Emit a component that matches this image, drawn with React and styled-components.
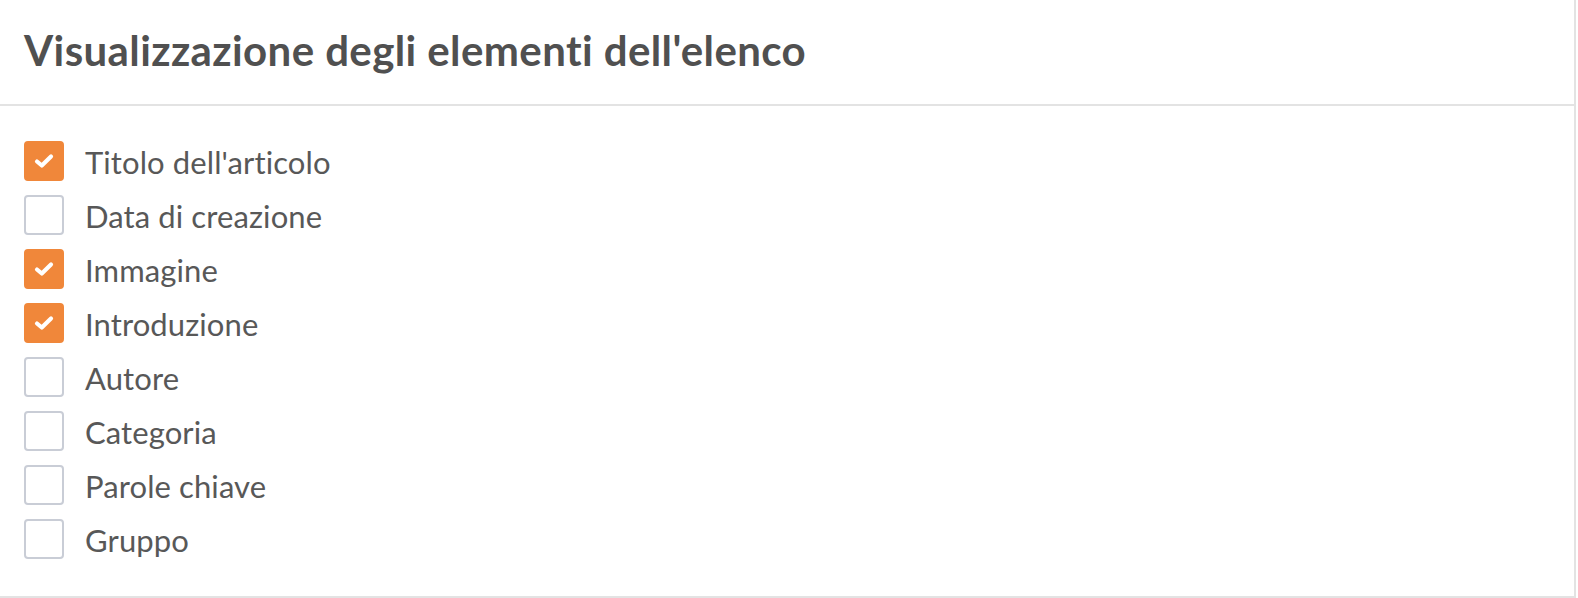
import React, { useState } from "react";
import styled, { createGlobalStyle } from "styled-components";

const Global = createGlobalStyle`
  html, body { margin: 0; padding: 0; background: #fff; }
  body { font-family: Lato, "Noto Sans", sans-serif; }
  * { box-sizing: border-box; }
`;

const Panel = styled.section`
  width: 1576px;
  height: 598px;
  background: #fff;
  border-right: 2px solid #e3e3e3;
  border-bottom: 2px solid #e3e3e3;
  display: flex;
  flex-direction: column;
`;

const Header = styled.header`
  height: 106px;
  padding: 0 24px 4px;
  display: flex;
  align-items: center;
  border-bottom: 2px solid #e3e3e3;
`;

const Title = styled.h2`
  margin: 0;
  font-size: 42px;
  font-weight: 700;
  color: #505050;
  letter-spacing: 0.4px;
`;

const List = styled.div`
  padding: 35px 24px 0;
  display: flex;
  flex-direction: column;
  gap: 14px;
`;

const Row = styled.label`
  display: flex;
  align-items: center;
  gap: 21px;
  height: 40px;
  cursor: pointer;
`;

const Box = styled.span`
  width: 40px;
  height: 40px;
  flex: none;
  border-radius: 4px;
  display: flex;
  align-items: center;
  justify-content: center;
  background: ${(p) => (p.$checked ? "#f0873a" : "#fff")};
  border: 2px solid ${(p) => (p.$checked ? "#f0873a" : "#c9cdd6")};
`;

const Label = styled.span`
  font-size: 31px;
  color: #585858;
  font-weight: 400;
  letter-spacing: 0.1px;
  padding-top: 2px;
`;

const Check = () => (
  <svg width="20" height="16" viewBox="0 0 20 16">
    <path d="M3 8.5 L7.8 12.5 L17 3.5" fill="none" stroke="#fff" strokeWidth="4.2" strokeLinecap="round" strokeLinejoin="round" />
  </svg>
);

const initial = [
  ["Titolo dell'articolo", true],
  ["Data di creazione", false],
  ["Immagine", true],
  ["Introduzione", true],
  ["Autore", false],
  ["Categoria", false],
  ["Parole chiave", false],
  ["Gruppo", false],
];

export default function App() {
  const [items, setItems] = useState(initial);
  const toggle = (i) =>
    setItems((s) => s.map((it, j) => (j === i ? [it[0], !it[1]] : it)));
  return (
    <>
      <Global />
      <Panel>
        <Header>
          <Title>Visualizzazione degli elementi dell'elenco</Title>
        </Header>
        <List>
          {items.map(([name, checked], i) => (
            <Row key={name} onClick={() => toggle(i)}>
              <Box $checked={checked}>{checked && <Check />}</Box>
              <Label>{name}</Label>
            </Row>
          ))}
        </List>
      </Panel>
    </>
  );
}
